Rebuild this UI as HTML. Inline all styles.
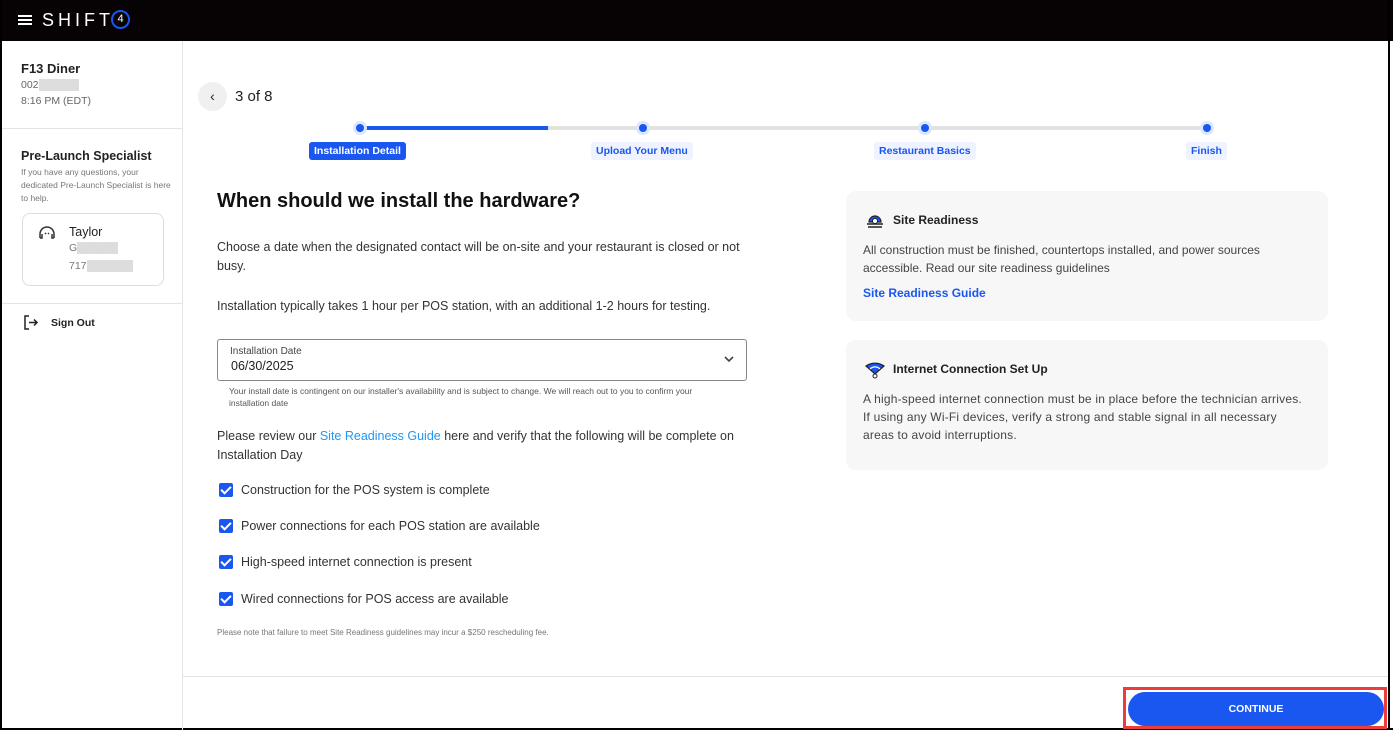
<!DOCTYPE html>
<html><head><meta charset="utf-8"><style>
*{margin:0;padding:0;box-sizing:border-box}
body{width:1393px;height:730px;position:relative;overflow:hidden;background:#fff;font-family:"Liberation Sans",sans-serif;color:#222}
.a{position:absolute}
.t{font-size:12.5px;color:#333;white-space:nowrap}
.b{font-weight:bold}
.cb{position:absolute;left:219px;width:14px;height:14px;background:#1a56f0;border-radius:2px}
.cb::after{content:"";position:absolute;left:4px;top:1px;width:4px;height:8px;border:solid #fff;border-width:0 2px 2px 0;transform:rotate(45deg)}
.dot{position:absolute;width:8px;height:8px;border-radius:50%;background:#1a56f0;box-shadow:0 0 0 3px #dbe6ff;top:124px}
.lbl{position:absolute;top:142px;height:18px;font-size:10.5px;font-weight:bold;color:#1a56f0;background:#eef3ff;padding:3px 5px;border-radius:3px;white-space:nowrap}
.card{position:absolute;left:846px;width:482px;background:#f7f7f7;border-radius:10px}
</style></head><body>
<div class="a" style="left:0;top:0;width:1393px;height:41px;background:#070304"></div>
<div class="a" style="left:0;top:0;width:2px;height:730px;background:#000"></div>
<div class="a" style="left:1388px;top:0;width:2px;height:730px;background:#000"></div>
<div class="a" style="left:0;top:728px;width:1393px;height:2px;background:#000"></div>
<div class="a" style="left:18px;top:15px;width:14px;height:2px;background:#fff;box-shadow:0 4px #fff,0 8px #fff"></div>
<div class="a" style="left:42px;top:10px;color:#fff;font-size:18px;letter-spacing:4px">SHIFT</div>
<div class="a" style="left:111px;top:10px;width:19px;height:19px;border:2px solid #1a56f0;border-radius:50%;color:#fff;font-size:11px;text-align:center;line-height:15px">4</div>
<!-- sidebar -->
<div class="a" style="left:182px;top:41px;width:1px;height:689px;background:#e4e4e4"></div>
<div class="a" style="left:2px;top:128px;width:180px;height:1px;background:#e4e4e4"></div>
<div class="a" style="left:2px;top:303px;width:180px;height:1px;background:#e4e4e4"></div>
<div class="a b" style="left:21px;top:61px;font-size:13px">F13 Diner</div>
<div class="a t" style="left:21px;top:79px;font-size:10.5px;color:#666">002<span style="background:#ddd;color:#ddd">1234567</span></div>
<div class="a t" style="left:21px;top:95px;font-size:10.5px;color:#666">8:16 PM (EDT)</div>
<div class="a b" style="left:21px;top:149px;font-size:12.5px">Pre-Launch Specialist</div>
<div class="a" style="left:21px;top:166px;font-size:8.5px;color:#777;line-height:13px;width:150px">If you have any questions, your dedicated Pre-Launch Specialist is here to help.</div>
<div class="a" style="left:22px;top:213px;width:142px;height:73px;border:1px solid #ddd;border-radius:8px"></div>
<svg class="a" style="left:37px;top:224px" width="20" height="18" viewBox="0 0 20 18"><path d="M3 14V10a7 7 0 0 1 14 0v4M3 14h2v-4M17 14h-2v-4M8 9l1 1M12 9l-1 1" fill="none" stroke="#333" stroke-width="1.5"/></svg>
<div class="a" style="left:69px;top:225px;font-size:12.5px">Taylor</div>
<div class="a" style="left:69px;top:242px;font-size:10.5px;color:#777">G<span style="background:#ddd;color:#ddd">ooooooo</span></div>
<div class="a" style="left:69px;top:260px;font-size:10.5px;color:#777">717<span style="background:#ddd;color:#ddd">oooooooo</span></div>
<svg class="a" style="left:23px;top:315px" width="16" height="15" viewBox="0 0 16 15"><path d="M6 1H2v13h4M6 7.5h8M11 4.5l3 3-3 3" fill="none" stroke="#222" stroke-width="1.5"/></svg>
<div class="a b" style="left:51px;top:317px;font-size:10.5px">Sign Out</div>
<!-- header -->
<div class="a" style="left:198px;top:82px;width:29px;height:29px;border-radius:50%;background:#f0f0f0;text-align:center;line-height:28px;font-size:14px">‹</div>
<div class="a" style="left:235px;top:88px;font-size:15px">3 of 8</div>
<div class="a" style="left:360px;top:126px;width:848px;height:4px;background:#e2e2e2"></div>
<div class="a" style="left:365px;top:126px;width:183px;height:4px;background:#1a56f0"></div>
<div class="dot" style="left:356px"></div><div class="dot" style="left:639px"></div><div class="dot" style="left:921px"></div><div class="dot" style="left:1203px"></div>
<div class="lbl" style="left:309px;background:#1a56f0;color:#fff">Installation Detail</div>
<div class="lbl" style="left:591px">Upload Your Menu</div>
<div class="lbl" style="left:874px">Restaurant Basics</div>
<div class="lbl" style="left:1186px">Finish</div>
<!-- main -->
<div class="a b" style="left:217px;top:190px;font-size:20px;color:#111">When should we install the hardware?</div>
<div class="a" style="left:217px;top:238px;font-size:12.5px;color:#333;line-height:19px;width:530px">Choose a date when the designated contact will be on-site and your restaurant is closed or not busy.</div>
<div class="a t" style="left:217px;top:299px">Installation typically takes 1 hour per POS station, with an additional 1-2 hours for testing.</div>
<div class="a" style="left:217px;top:339px;width:530px;height:42px;border:1px solid #888;border-radius:3px"></div>
<div class="a" style="left:230px;top:346px;font-size:10px;color:#444">Installation Date</div>
<div class="a" style="left:231px;top:359px;font-size:12.5px;color:#222">06/30/2025</div>
<svg class="a" style="left:723px;top:355px" width="12" height="8" viewBox="0 0 12 8"><path d="M2 2l4 4 4-4" fill="none" stroke="#444" stroke-width="1.6"/></svg>
<div class="a" style="left:229px;top:385px;font-size:8.5px;color:#555;line-height:12px;width:495px">Your install date is contingent on our installer's availability and is subject to change. We will reach out to you to confirm your installation date</div>
<div class="a" style="left:217px;top:427px;font-size:12.5px;color:#333;line-height:19px;width:530px">Please review our <span style="color:#2196f3">Site Readiness Guide</span> here and verify that the following will be complete on Installation Day</div>
<div class="cb" style="top:483px"></div><div class="a t" style="left:241px;top:483px">Construction for the POS system is complete</div>
<div class="cb" style="top:519px"></div><div class="a t" style="left:241px;top:519px">Power connections for each POS station are available</div>
<div class="cb" style="top:555px"></div><div class="a t" style="left:241px;top:555px">High-speed internet connection is present</div>
<div class="cb" style="top:592px"></div><div class="a t" style="left:241px;top:592px">Wired connections for POS access are available</div>
<div class="a" style="left:217px;top:628px;font-size:8px;color:#777">Please note that failure to meet Site Readiness guidelines may incur a $250 rescheduling fee.</div>
<!-- cards -->
<div class="card" style="top:191px;height:130px"></div>
<svg class="a" style="left:865px;top:210px" width="20" height="20" viewBox="0 0 20 20"><path d="M4 12a6 6 0 0 1 12 0z" fill="#1a56f0" stroke="#222" stroke-width="1.2"/><circle cx="10" cy="11" r="2.5" fill="#fff" stroke="#222"/><path d="M2 14h16M3 17h14" stroke="#222" stroke-width="1.6"/></svg>
<div class="a b" style="left:893px;top:213px;font-size:12px">Site Readiness</div>
<div class="a" style="left:863px;top:241px;font-size:12px;color:#444;line-height:18px;width:450px">All construction must be finished, countertops installed, and power sources accessible. Read our site readiness guidelines</div>
<div class="a b" style="left:863px;top:286px;font-size:12px;color:#1a56f0">Site Readiness Guide</div>
<div class="card" style="top:340px;height:130px"></div>
<svg class="a" style="left:865px;top:360px" width="20" height="20" viewBox="0 0 20 20"><path d="M1 6a13 10 0 0 1 18 0L10 14z" fill="#1a56f0" stroke="#222" stroke-width="1.2"/><path d="M5 9a7 7 0 0 1 10 0" stroke="#fff" stroke-width="1.2" fill="none"/><circle cx="10" cy="16" r="2" fill="#fff" stroke="#222"/></svg>
<div class="a b" style="left:893px;top:362px;font-size:12px">Internet Connection Set Up</div>
<div class="a" style="left:863px;top:390px;font-size:12px;color:#444;line-height:18px;width:448px;letter-spacing:0.2px">A high-speed internet connection must be in place before the technician arrives. If using any Wi-Fi devices, verify a strong and stable signal in all necessary areas to avoid interruptions.</div>
<!-- footer -->
<div class="a" style="left:183px;top:676px;width:1205px;height:1px;background:#e4e4e4"></div>
<div class="a" style="left:1123px;top:687px;width:264px;height:42px;border:3px solid #ee3b3b"></div>
<div class="a b" style="left:1128px;top:692px;width:256px;height:34px;border-radius:17px;background:#1a56f0;color:#fff;font-size:10.5px;text-align:center;line-height:34px">CONTINUE</div>
</body></html>
